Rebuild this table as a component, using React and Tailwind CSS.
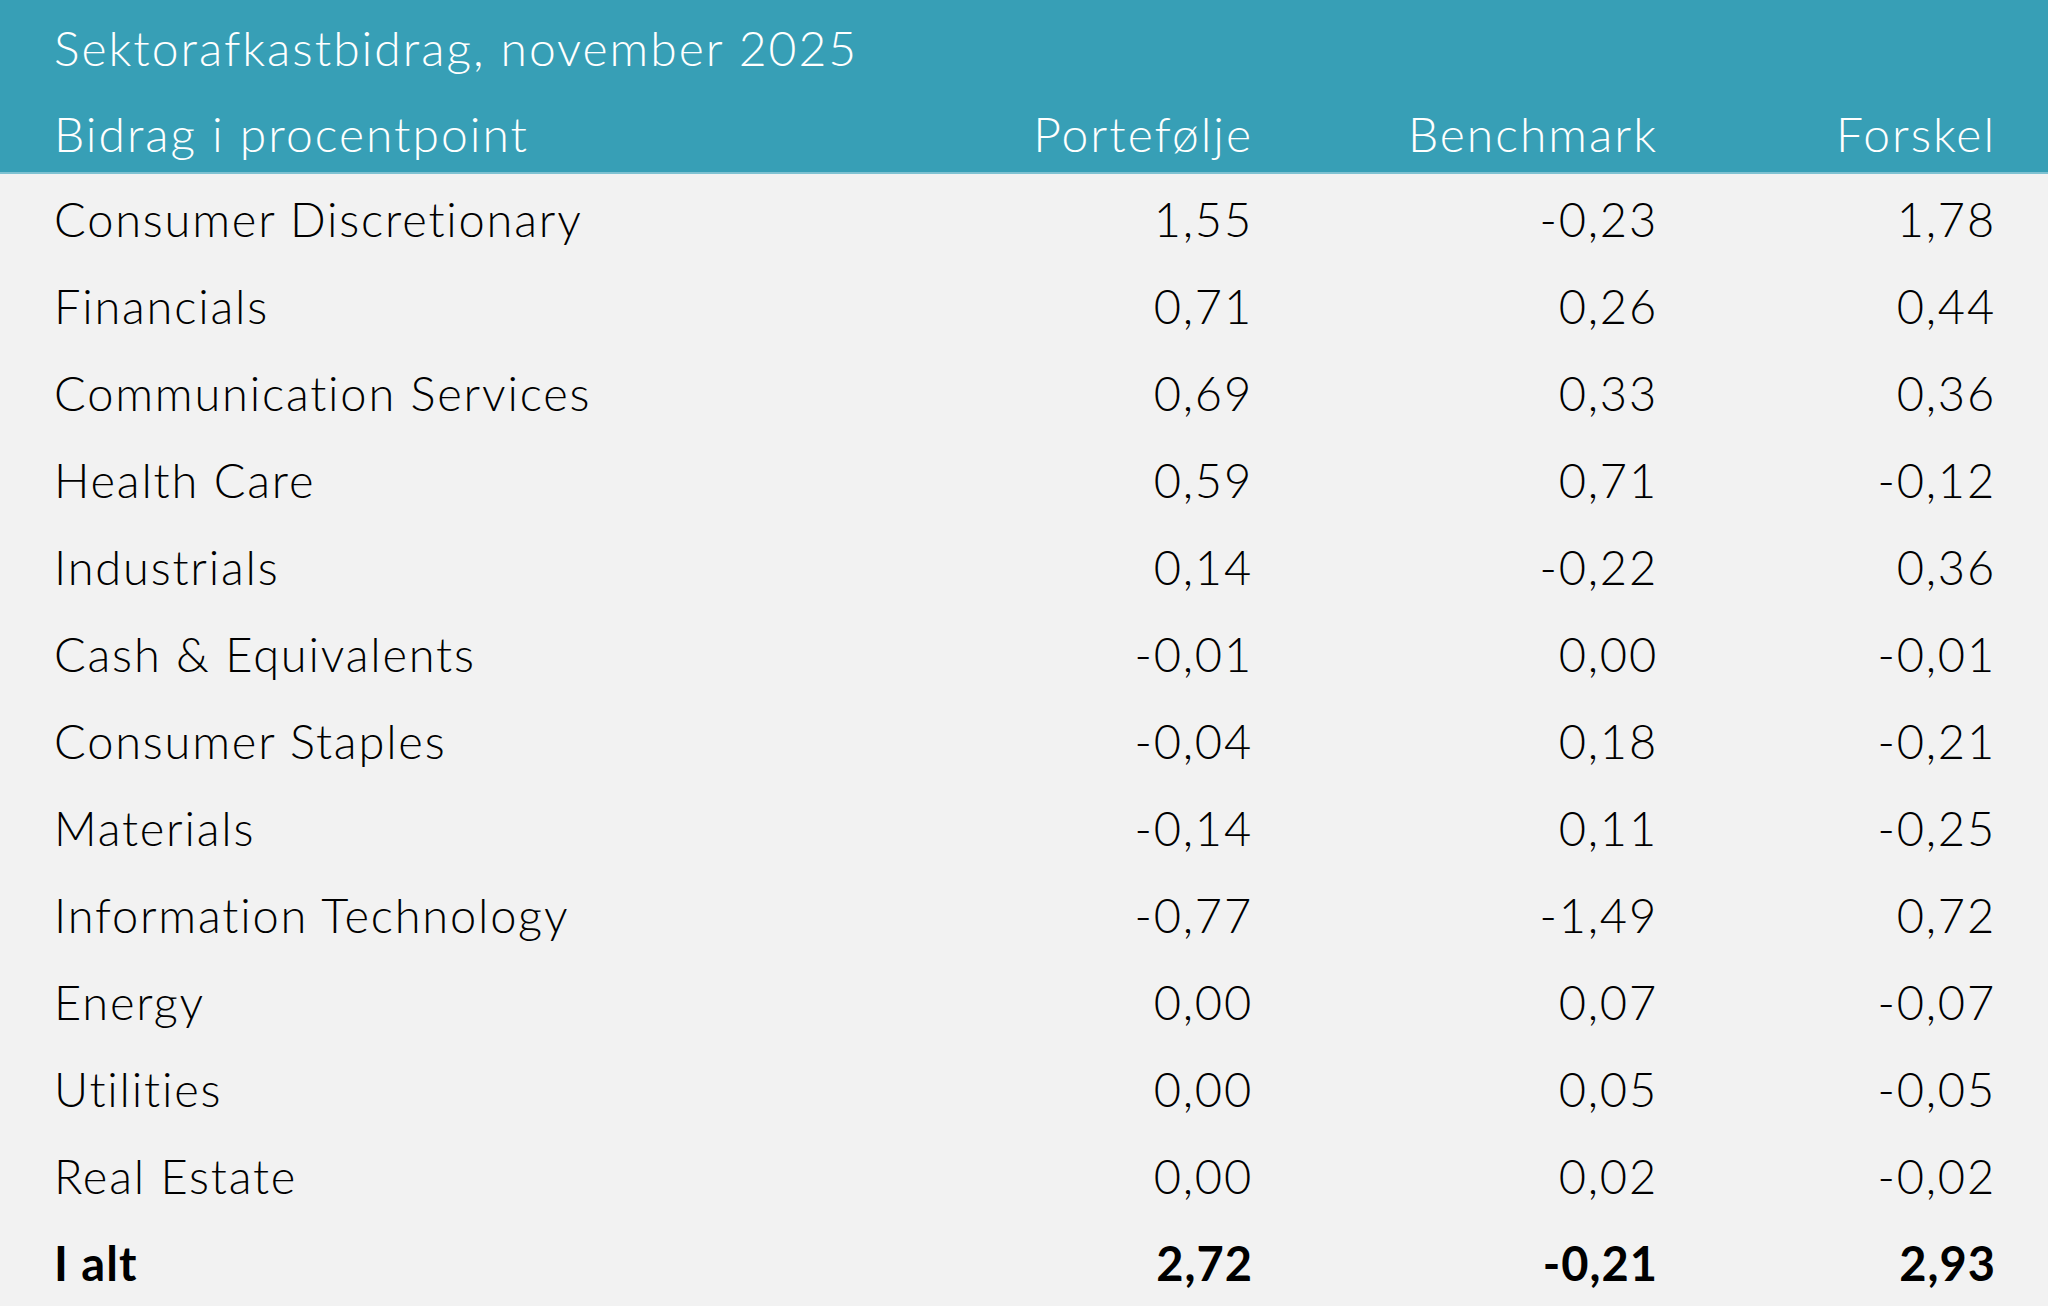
import React from "react";

const rows = [
  ["Consumer Discretionary", "1,55", "-0,23", "1,78"],
  ["Financials", "0,71", "0,26", "0,44"],
  ["Communication Services", "0,69", "0,33", "0,36"],
  ["Health Care", "0,59", "0,71", "-0,12"],
  ["Industrials", "0,14", "-0,22", "0,36"],
  ["Cash & Equivalents", "-0,01", "0,00", "-0,01"],
  ["Consumer Staples", "-0,04", "0,18", "-0,21"],
  ["Materials", "-0,14", "0,11", "-0,25"],
  ["Information Technology", "-0,77", "-1,49", "0,72"],
  ["Energy", "0,00", "0,07", "-0,07"],
  ["Utilities", "0,00", "0,05", "-0,05"],
  ["Real Estate", "0,00", "0,02", "-0,02"],
];

const grid = "grid grid-cols-[1fr_400px_405px_338px] items-center";

export default function App() {
  return (
    <div className="w-[2048px] h-[1306px] overflow-hidden bg-[#f2f2f2] font-['Lato',sans-serif] font-light leading-none text-black">
      <div className="h-[174px] bg-[#379fb6] border-b-2 border-[#7fc2d2] text-white text-[48px] tracking-[2px] pl-[54px] pr-[52px]">
        <div className="h-[96px] flex items-center">Sektorafkastbidrag, november 2025</div>
        <div className={`${grid} h-[76px]`}>
          <div>Bidrag i procentpoint</div>
          <div className="text-right">Portefølje</div>
          <div className="text-right">Benchmark</div>
          <div className="text-right">Forskel</div>
        </div>
      </div>
      <div className="pl-[54px] pr-[52px] pt-[2px] text-[47px] tracking-[1.8px]">
        {rows.map((r) => (
          <div key={r[0]} className={`${grid} h-[87px]`}>
            <div>{r[0]}</div>
            <div className="text-right">{r[1]}</div>
            <div className="text-right">{r[2]}</div>
            <div className="text-right">{r[3]}</div>
          </div>
        ))}
        <div className={`${grid} h-[87px] font-bold tracking-[1px]`}>
          <div>I alt</div>
          <div className="text-right">2,72</div>
          <div className="text-right">-0,21</div>
          <div className="text-right">2,93</div>
        </div>
      </div>
    </div>
  );
}
